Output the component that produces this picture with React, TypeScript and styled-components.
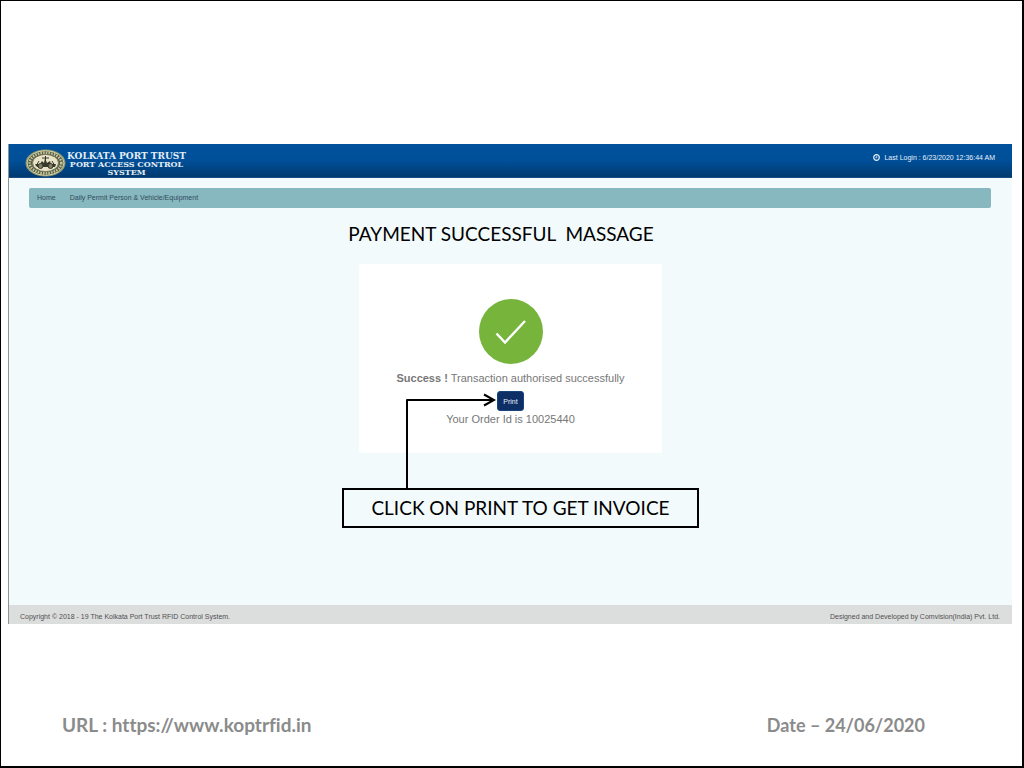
import React from "react";
import styled, { createGlobalStyle } from "styled-components";

const GlobalStyle = createGlobalStyle`
  *, *::before, *::after { box-sizing: border-box; }
  body { margin: 0; background: #fff; font-family: "Liberation Sans", Arial, sans-serif; }
`;

const Slide = styled.div`
  min-height: 100vh;
  display: flex;
  flex-direction: column;
  padding: 143px 10px 0 7px;
  border: solid #000;
  border-width: 1px 2px 2px 1px;
`;

const Portal = styled.div`
  display: flex;
  flex-direction: column;
  min-height: 480px;
  background: #f2fafb;
  border-left: 1px solid #8d9496;
`;

const Header = styled.header`
  display: flex;
  justify-content: space-between;
  height: 34px;
  padding: 5px 17px 0 16px;
  color: #fff;
  background: linear-gradient(#00529c, #004f98 50%, #003a70);
  border-bottom: 1px solid #1a4d85;
`;

const Brand = styled.div`
  display: flex;
  gap: 1px;
`;

const BrandName = styled.div`
  padding-top: 3px;
  color: #e4eef6;
  font: bold 9px/8px "DejaVu Serif", serif;
  text-align: center;
`;

const BrandLine = styled.div`
  font-size: ${(p: { $small?: boolean }) => (p.$small ? "8px" : "9px")};
`;

const LastLogin = styled.div`
  display: flex;
  align-items: center;
  gap: 4px;
  height: 16px;
  font-size: 7px;
  color: #e6f1fa;
`;

const Breadcrumb = styled.nav`
  display: flex;
  gap: 14px;
  margin: 10px 21px 0 20px;
  padding: 0 8px;
  border-radius: 2px;
  background: #88b8bf;
  font-size: 7px;
  line-height: 20px;
`;

const Crumb = styled.a`
  color: #304b5b;
  text-decoration: none;
`;

const Main = styled.main`
  flex: 1;
  display: flex;
  flex-direction: column;
  align-items: center;
`;

const Title = styled.h1`
  margin: 14px 19px 18px 0;
  font: 400 19px/24px Lato, sans-serif;
  white-space: pre;
  color: #000;
`;

const Card = styled.section`
  position: relative;
  display: flex;
  flex-direction: column;
  align-items: center;
  width: 303px;
  min-height: 189px;
  padding-top: 35px;
  border-radius: 2px;
  background: #fff;
`;

const Message = styled.p`
  margin: 0;
  color: #777;
  font-size: 11px;
  line-height: 16px;
`;

const Status = styled(Message)`
  margin: 6px 0 5px;
`;

const PrintButton = styled.button`
  height: 20px;
  padding: 0 5px;
  border: 1px solid #17447c;
  border-radius: 3px;
  background: #0e2f66;
  color: #e8eef8;
  font: 7px "Liberation Sans", Arial, sans-serif;
`;

const Arrow = styled.svg`
  position: absolute;
  top: 128px;
  left: 46px;
`;

const Callout = styled.div`
  margin: 35px 0 0 20px;
  padding: 0 27px;
  border: 2px solid #000;
  font: 400 19px/36px Lato, sans-serif;
  color: #000;
`;

const Footer = styled.footer`
  display: flex;
  justify-content: space-between;
  padding: 4px 12px 0 11px;
  background: #dcdddd;
  color: #505050;
  font-size: 7px;
  line-height: 15px;
`;

const SlideFooter = styled.div`
  display: flex;
  justify-content: space-between;
  padding: 89px 87px 0 54px;
  color: #8b8b8b;
  font: bold 18px/24px Lato, sans-serif;
  font-variant-ligatures: none;
`;

const SlideLink = styled.a`
  color: inherit;
  font-size: 19px;
  text-decoration: none;
`;

function Emblem() {
  return (
    <svg width="41" height="28" viewBox="0 0 41 28" aria-hidden="true">
      <ellipse cx="20.5" cy="14" rx="20" ry="13.5" fill="#8d9670" />
      <ellipse cx="20.5" cy="14" rx="18.5" ry="12.3" fill="#565e43" stroke="#d8d5a6" />
      <ellipse cx="20.5" cy="14" rx="15.8" ry="10.3" fill="none" stroke="#c5c6a0" strokeWidth="2.5" strokeDasharray="1.5 1.2" />
      <ellipse cx="20.5" cy="14" rx="13" ry="8.6" fill="#e9e3c8" stroke="#77775b" />
      <path d="M10 15h5l2-3 2 2 1-5 2 5 3-2 1 3h5l-1 3H12z" fill="#38382b" />
      <path d="M20.5 7v11M17 9h7M14 12l-3 5M27 12l3 5" stroke="#38382b" />
      <circle cx="15.5" cy="17" r="2.5" fill="#817d61" stroke="#38382b" />
      <circle cx="25.5" cy="17" r="2.5" fill="#817d61" stroke="#38382b" />
    </svg>
  );
}

export default function App() {
  return (
    <>
      <GlobalStyle />
      <Slide>
        <Portal>
          <Header>
            <Brand>
              <Emblem />
              <BrandName>
                <BrandLine>KOLKATA PORT TRUST</BrandLine>
                <BrandLine $small>PORT ACCESS CONTROL</BrandLine>
                <BrandLine $small>SYSTEM</BrandLine>
              </BrandName>
            </Brand>
            <LastLogin>
              <svg width="7" height="7" viewBox="0 0 7 7" fill="none" stroke="currentColor" aria-hidden="true">
                <circle cx="3.5" cy="3.5" r="2.8" strokeWidth="1.2" />
                <path d="M3.7 1.8v2H2.3" strokeWidth=".8" />
              </svg>
              <span>Last Login : 6/23/2020 12:36:44 AM</span>
            </LastLogin>
          </Header>
          <Breadcrumb aria-label="Breadcrumb">
            <Crumb href="#home">Home</Crumb>
            <Crumb href="#permit">Daily Permit Person &amp; Vehicle/Equipment</Crumb>
          </Breadcrumb>
          <Main>
            <Title>{"PAYMENT SUCCESSFUL  MASSAGE"}</Title>
            <Card>
              <svg width="64" height="65" viewBox="0 0 64 65" aria-hidden="true">
                <ellipse cx="32" cy="32.5" rx="32" ry="32.5" fill="#77b43c" />
                <path d="M17.5 34.5l8.5 9 20-21.5" fill="none" stroke="#fff" strokeWidth="2.4" />
              </svg>
              <Status>
                <strong>Success !</strong> Transaction authorised successfully
              </Status>
              <PrintButton type="button">Print</PrintButton>
              <Message>Your Order Id is 10025440</Message>
              <Arrow width="94" height="98" viewBox="0 0 94 98" fill="none" stroke="#000" strokeWidth="2" aria-hidden="true">
                <path d="M2 97V8h87" strokeLinejoin="round" />
                <path d="M79 2.500l10 5.500-10 5.500" />
              </Arrow>
            </Card>
            <Callout>CLICK ON PRINT TO GET INVOICE</Callout>
          </Main>
          <Footer>
            <span>Copyright © 2018 - 19 The Kolkata Port Trust RFID Control System.</span>
            <span>Designed and Developed by Comvision(India) Pvt. Ltd.</span>
          </Footer>
        </Portal>
        <SlideFooter>
          <SlideLink href="https://www.koptrfid.in">URL : https://www.koptrfid.in</SlideLink>
          <span>Date – 24/06/2020</span>
        </SlideFooter>
      </Slide>
    </>
  );
}
